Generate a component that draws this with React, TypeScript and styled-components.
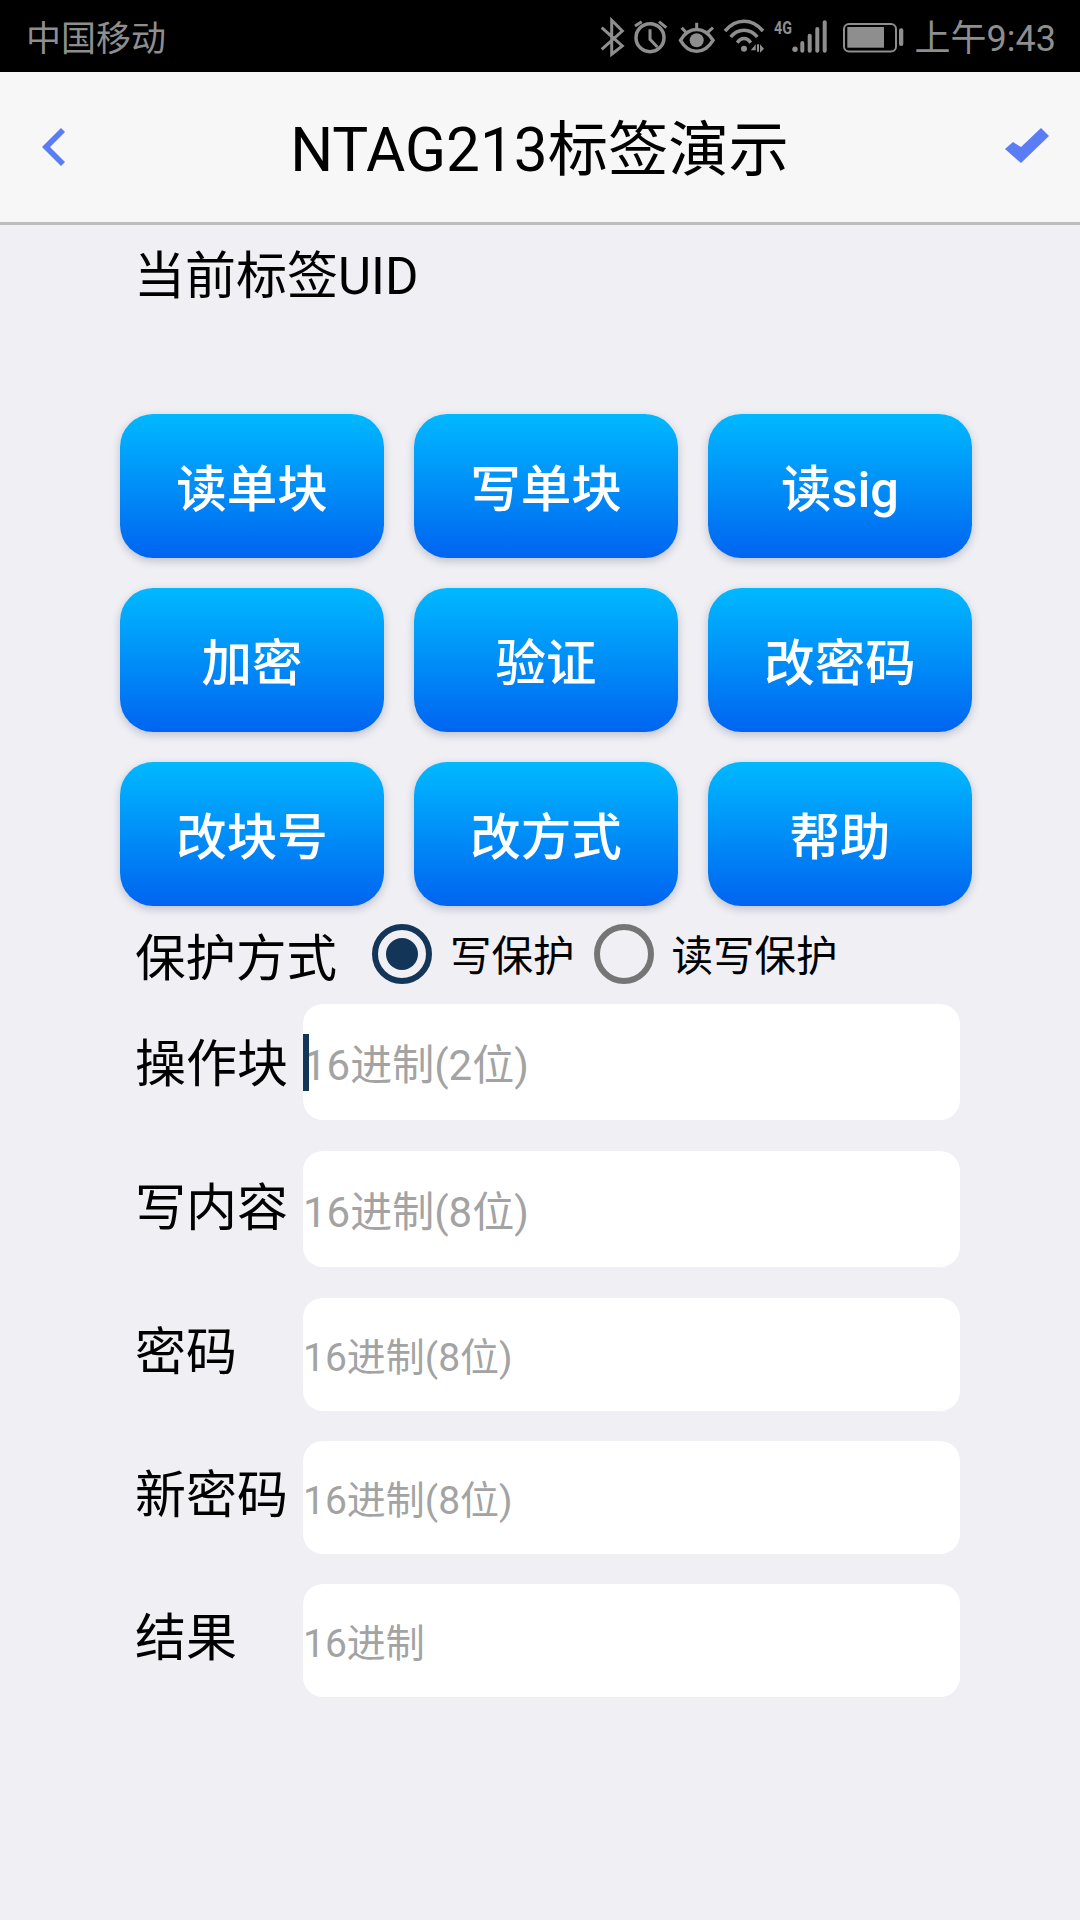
import React from "react";
import styled, { createGlobalStyle } from "styled-components";

const Global = createGlobalStyle`
  html, body { margin: 0; padding: 0; background: #efeff4; }
  body { font-family: Roboto, "Noto Sans CJK SC", sans-serif; }
`;

const Page = styled.div`
  width: 1080px;
  height: 1920px;
  background: #efeff4;
  overflow: hidden;
`;

const StatusBar = styled.div`
  height: 72px;
  background: #000;
  color: #8e8e8e;
  display: flex;
  align-items: center;
  padding: 0 24px 0 26px;
`;

const Carrier = styled.span`
  font-size: 35px;
  padding-bottom: 2px;
  flex: 1;
`;

const Clock = styled.span`
  font-size: 36px;
  padding-bottom: 2px;
  margin-left: 10px;
`;

const StatusIcons = styled.svg`
  width: 306px;
  height: 40px;
  display: block;
  margin-top: 2px;
`;

const NavBar = styled.div`
  height: 150px;
  background: #f7f7f7;
  border-bottom: 3px solid #bdbdbd;
  display: grid;
  grid-template-columns: 1fr auto 1fr;
  align-items: center;
`;

const Title = styled.div`
  font-size: 60.3px;
  padding-bottom: 5px;
  margin-right: 1px;
  color: #000;
`;

const NavIcon = styled.svg<{ $end?: boolean }>`
  display: block;
  fill: #5a7cf5;
  justify-self: ${(p) => (p.$end ? "end" : "start")};
  margin: ${(p) => (p.$end ? "0 31px 3px 0" : "0 0 0 42px")};
`;

const Content = styled.div`
  padding: 0 0 0 120px;
`;

const Uid = styled.div`
  font-size: 51px;
  line-height: 60px;
  color: #000;
  margin: 22px 0 0 14px;
`;

const ButtonGrid = styled.div`
  display: grid;
  grid-template-columns: repeat(3, 264px);
  grid-auto-rows: 144px;
  gap: 30px;
  margin-top: 107px;
`;

const ActionButton = styled.div`
  border-radius: 33px;
  background: linear-gradient(180deg, #00b9ff 0%, #0064f0 100%);
  box-shadow: 0 3px 8px rgba(60, 70, 100, 0.28);
  color: #fff;
  font-size: 50.5px;
  font-weight: 500;
  padding-bottom: 3px;
  box-sizing: border-box;
  display: flex;
  align-items: center;
  justify-content: center;
`;

const RadioRow = styled.div`
  display: flex;
  align-items: center;
  height: 60px;
  margin: 18px 0 0 15px;
`;

const RowLabel = styled.span`
  font-size: 50.5px;
  width: 237px;
  color: #000;
`;

const Radio = styled.span<{ $on?: boolean }>`
  box-sizing: border-box;
  width: 60px;
  height: 60px;
  border-radius: 50%;
  border: 6px solid ${(p) => (p.$on ? "#133558" : "#757575")};
  display: flex;
  align-items: center;
  justify-content: center;
  flex: none;
  &::after {
    content: "";
    display: ${(p) => (p.$on ? "block" : "none")};
    width: 32px;
    height: 32px;
    border-radius: 50%;
    background: #133558;
  }
`;

const RadioText = styled.span`
  font-size: 41.5px;
  padding-bottom: 2px;
  color: #000;
  margin: 0 19px 0 18px;
`;

const FieldRow = styled.div<{ $h: number; $top: number }>`
  display: flex;
  align-items: center;
  height: ${(p) => p.$h}px;
  margin-top: ${(p) => p.$top}px;
`;

const FieldLabel = styled.span<{ $shift: number }>`
  font-size: 51px;
  line-height: 60px;
  color: #000;
  width: 168px;
  margin: ${(p) => p.$shift * 2}px 0 0 15px;
  white-space: nowrap;
`;

const FieldBox = styled.div`
  position: relative;
  width: 657px;
  height: 100%;
  background: #fff;
  border-radius: 20px;
  display: flex;
  align-items: center;
`;

const Placeholder = styled.span<{ $size: number }>`
  font-size: ${(p) => p.$size}px;
  color: #a3a3a3;
  padding-bottom: 1px;
`;

const Caret = styled.span`
  position: absolute;
  left: 0;
  top: 30px;
  width: 6px;
  height: 57px;
  background: #133558;
`;

const buttons = ["读单块", "写单块", "读sig", "加密", "验证", "改密码", "改块号", "改方式", "帮助"];

const fields = [
  { label: "操作块", hint: "16进制(2位)", h: 116, top: 20, size: 42, shift: 3, caret: true },
  { label: "写内容", hint: "16进制(8位)", h: 116, top: 31, size: 42, shift: 0 },
  { label: "密码", hint: "16进制(8位)", h: 113, top: 31, size: 39, shift: -2 },
  { label: "新密码", hint: "16进制(8位)", h: 113, top: 30, size: 39, shift: -2 },
  { label: "结果", hint: "16进制", h: 113, top: 30, size: 39, shift: -2 },
];

const Icons = () => (
  <StatusIcons viewBox="0 0 306 40">
    <g fill="none" stroke="#8e8e8e" strokeWidth="3">
      <path d="M2.7 10.7 L23.3 29 L12.7 37.3 V3.3 L23.3 14 L2.7 32.3" />
      <circle cx="51" cy="20.7" r="14" strokeWidth="3.5" />
      <path d="M51 12.3 V22.3 L58.3 30" />
      <path d="M36 9 L42.7 4.7 M60 4.7 L67.3 10.7" />
      <path d="M81.5 23.3 C90 9 105 9 114 23.3 C105 38 90 38 81.5 23.3 Z" strokeWidth="3.5" />
      <path d="M97.7 5.7 V12 M82.7 10.7 L88.3 16.7 M114 10.7 L107.3 16.7" />
      <path d="M126 14 C137 1 153 1 164 14 M131.7 20 C139 11 151 11 158.3 20 M138.3 25.7 C142 20 148 20 151.7 25.7" strokeWidth="3.5" />
    </g>
    <g fill="#8e8e8e">
      <circle cx="97.7" cy="23.3" r="7" />
      <circle cx="145" cy="31.7" r="3" />
      <path d="M151.7 33.3 L156.7 27.3 V33.3 Z M158 27.3 H160 V34.7 H158 Z M161 27.3 L165 31.7 L161 35.7 Z" />
      <text x="175" y="16.7" fontFamily="Roboto, sans-serif" fontWeight="700" fontSize="18" textLength="18" lengthAdjust="spacingAndGlyphs">4G</text>
      <circle cx="196" cy="32.3" r="2.7" />
      <rect x="201.3" y="24" width="4" height="11.7" rx="2" />
      <rect x="208.7" y="16.7" width="4" height="19" rx="2" />
      <rect x="216.3" y="10" width="4" height="25.7" rx="2" />
      <rect x="223.7" y="3.3" width="4" height="32.4" rx="2" />
      <rect x="248.3" y="10" width="36.7" height="20.7" />
      <rect x="300" y="11.3" width="4.3" height="17.7" rx="2" />
    </g>
    <rect x="245" y="7" width="52" height="27.5" rx="5" fill="none" stroke="#8e8e8e" strokeWidth="2" />
  </StatusIcons>
);

export default function App() {
  return (
    <Page>
      <Global />
      <StatusBar>
        <Carrier>中国移动</Carrier>
        <Icons />
        <Clock>上午9:43</Clock>
      </StatusBar>
      <NavBar>
        <NavIcon width="23" height="38" viewBox="0 0 23 38">
          <path d="M0 19 L19 0 L23 4 L8 19 L23 34 L19 38 Z" />
        </NavIcon>
        <Title>NTAG213标签演示</Title>
        <NavIcon $end width="44" height="35" viewBox="0 0 44 35">
          <path d="M0 21 L8 14 L16 19 L36 0 L44 8 L16 35 Z" />
        </NavIcon>
      </NavBar>
      <Content>
        <Uid>当前标签UID</Uid>
        <ButtonGrid>
          {buttons.map((b) => (
            <ActionButton key={b}>{b}</ActionButton>
          ))}
        </ButtonGrid>
        <RadioRow>
          <RowLabel>保护方式</RowLabel>
          <Radio $on />
          <RadioText>写保护</RadioText>
          <Radio />
          <RadioText>读写保护</RadioText>
        </RadioRow>
        {fields.map((f) => (
          <FieldRow key={f.label} $h={f.h} $top={f.top}>
            <FieldLabel $shift={f.shift}>{f.label}</FieldLabel>
            <FieldBox>
              {f.caret && <Caret />}
              <Placeholder $size={f.size}>{f.hint}</Placeholder>
            </FieldBox>
          </FieldRow>
        ))}
      </Content>
    </Page>
  );
}
